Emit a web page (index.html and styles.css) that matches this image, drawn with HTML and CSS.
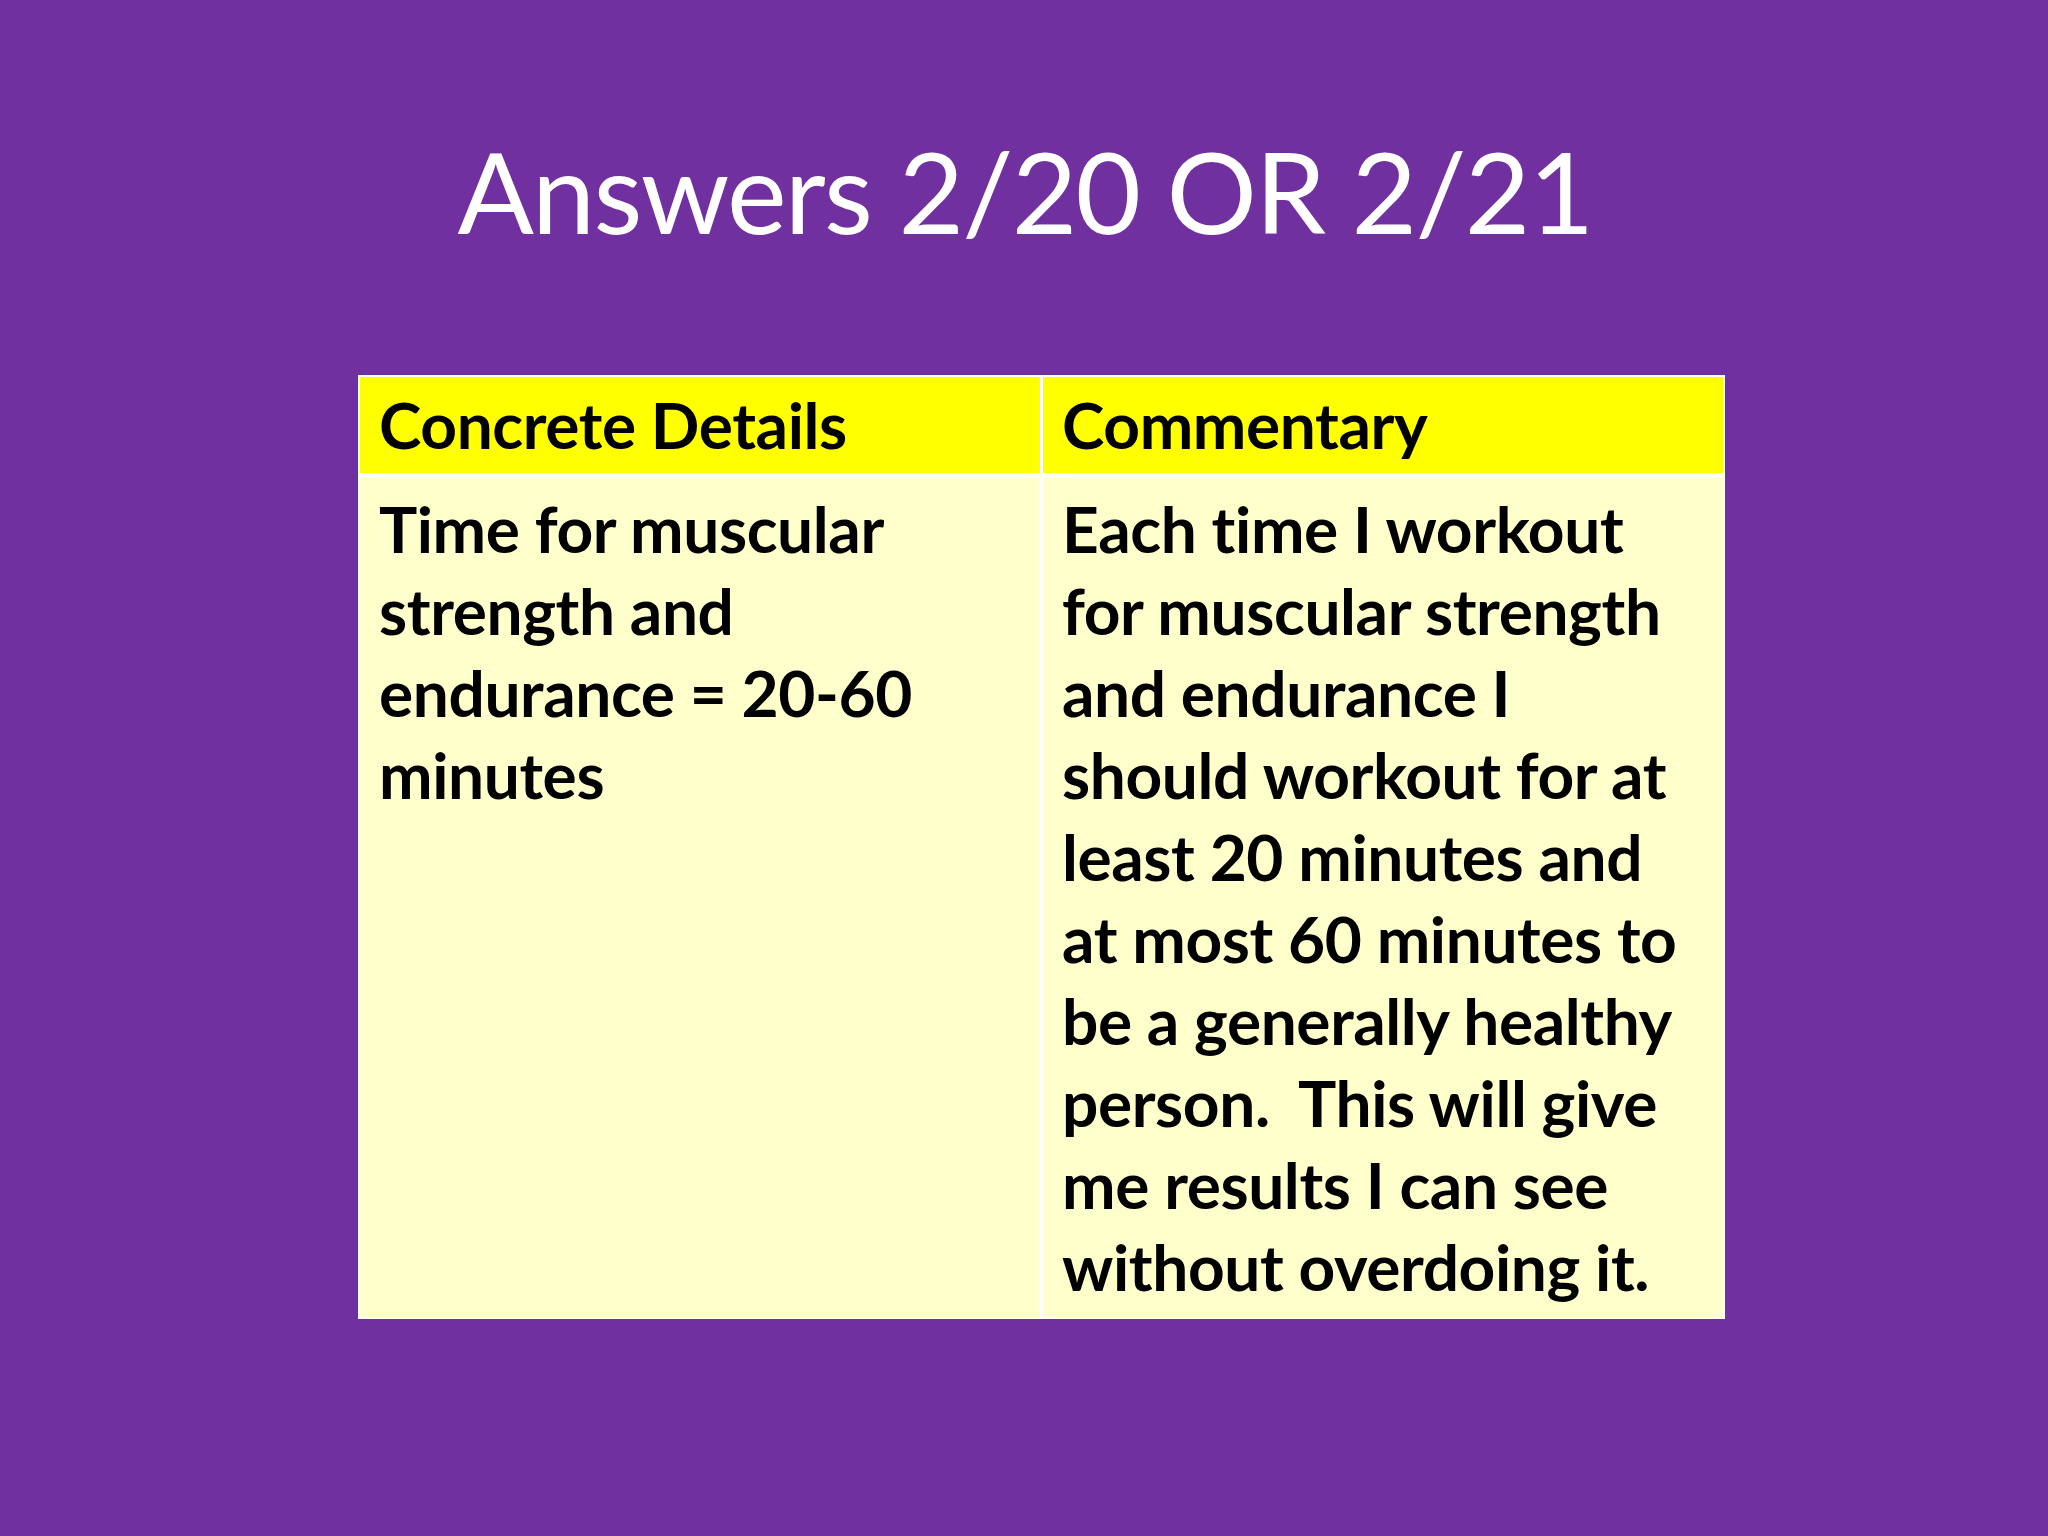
FILE: index.html
```html
<!DOCTYPE html>
<html>
<head>
<meta charset="utf-8">
<link rel="stylesheet" href="styles.css">
</head>
<body>
<div class="slide">
  <h1 class="title">Answers 2/20 OR 2/21</h1>
  <div class="table">
    <div class="cell head">Concrete Details</div>
    <div class="cell head">Commentary</div>
    <div class="cell body">Time for muscular<br>strength and<br>endurance = 20-60<br>minutes</div>
    <div class="cell body">Each time I workout<br>for muscular strength<br>and endurance I<br>should workout for at<br>least 20 minutes and<br>at most 60 minutes to<br>be a generally healthy<br>person.&nbsp; This will give<br>me results I can see<br>without overdoing it.</div>
  </div>
</div>
</body>
</html>
```
FILE: styles.css
```css
html, body {
  margin: 0;
  padding: 0;
  background: #7030a0;
}
.slide {
  width: 2048px;
  height: 1536px;
  display: flex;
  flex-direction: column;
  align-items: center;
  font-family: Lato, "Open Sans", sans-serif;
}
.title {
  margin: 0;
  padding-top: 122px;
  font-size: 113px;
  font-weight: 400;
  line-height: 136px;
  color: #ffffff;
  letter-spacing: -1.7px;
  margin-left: 2px;
}
.table {
  align-self: flex-start;
  margin-top: 117px;
  margin-left: 358px;
  width: 1367px;
  height: 944px;
  box-sizing: border-box;
  background: #ffffff;
  padding: 2px;
  display: grid;
  grid-template-columns: 1fr 1fr;
  grid-template-rows: 96px 1fr;
  gap: 5px 3px;
}
.cell {
  padding-left: 19px;
  font-weight: 700;
  font-size: 64px;
  color: #000000;
  letter-spacing: -0.4px;
}
.head {
  background: #ffff00;
  line-height: 96px;
}
.body {
  background: #ffffcc;
  padding-top: 10px;
  line-height: 82px;
}
```
